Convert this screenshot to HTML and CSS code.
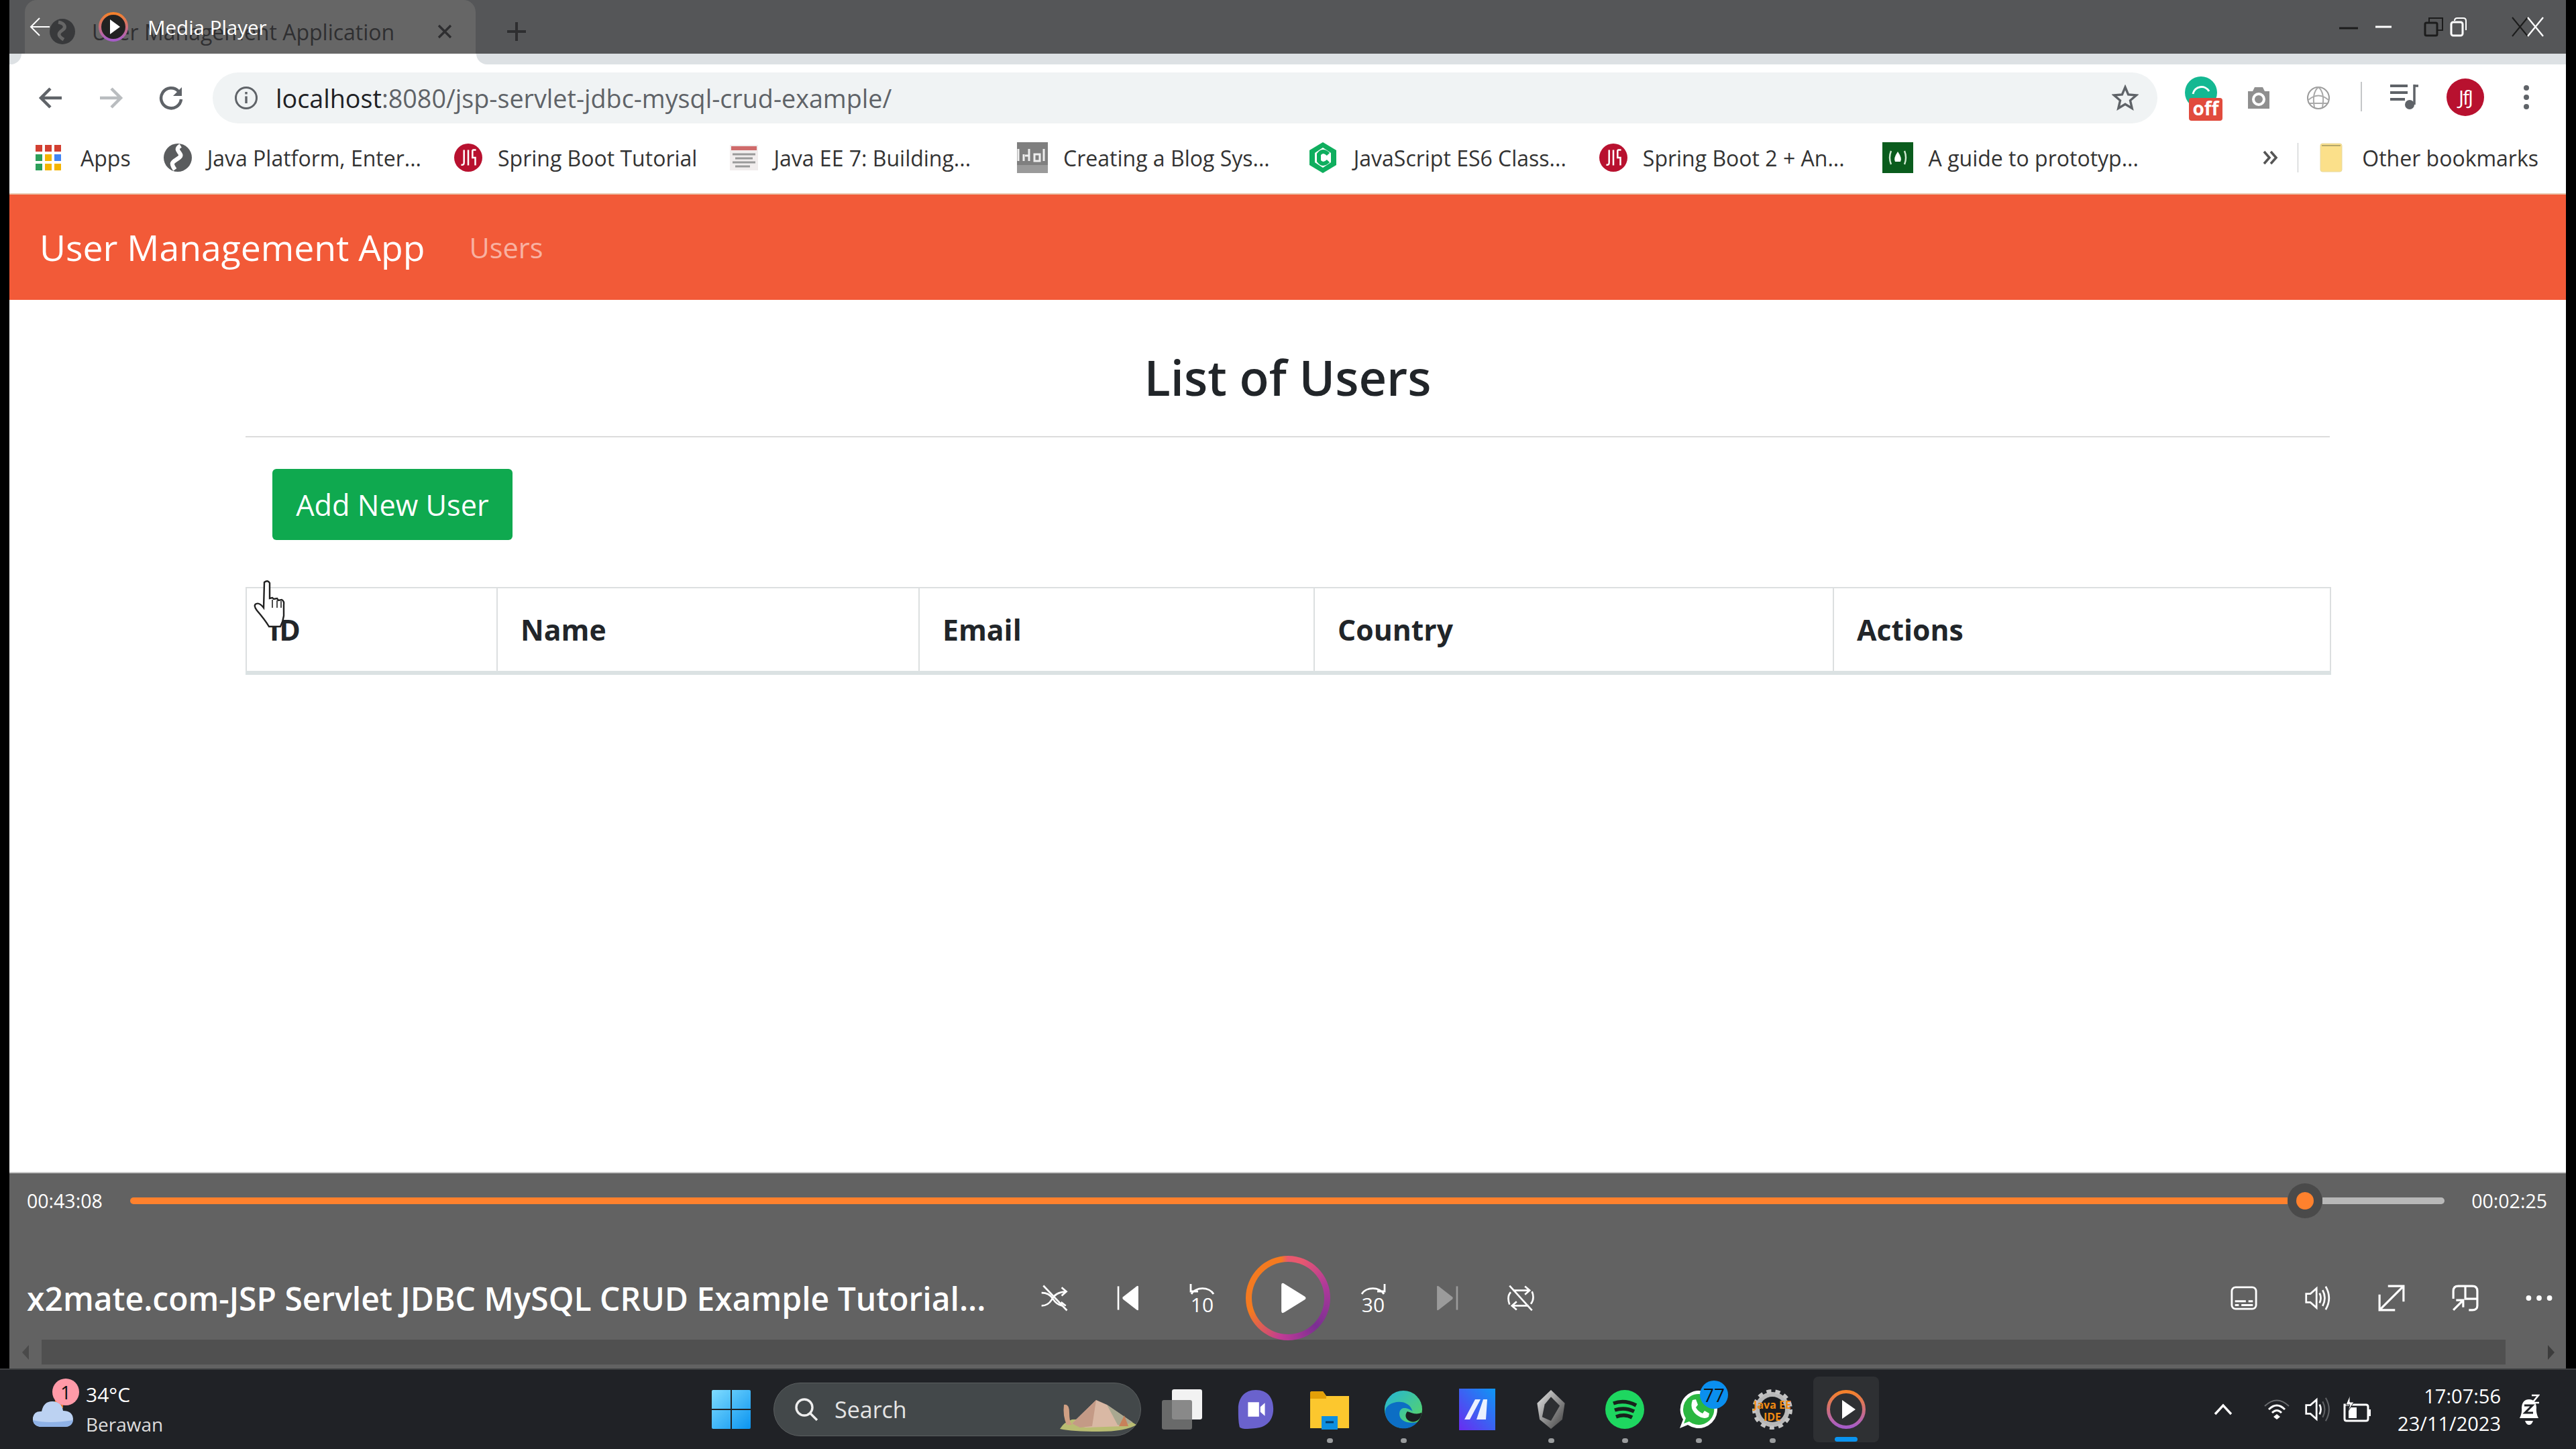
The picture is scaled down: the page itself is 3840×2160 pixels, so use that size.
FILE: index.html
```html
<!DOCTYPE html>
<html lang="en">
<head>
    <meta charset="UTF-8">
    <title>User Management Application</title>
    <link rel="stylesheet" href="styles.css">
</head>
<body>
<div class="screen">
    <div class="window">
        <!-- browser tabs -->
        <div class="tabbar">
            <div class="tab">
                <svg class="tab-globe" viewBox="0 0 40 40"><circle cx="20" cy="20" r="19" fill="#38393b"/><path d="M14 6c10 2 12 8 6 12s-8 8 2 14" fill="none" stroke="#666" stroke-width="5"/></svg>
                <span class="tab-title">User Management Application</span>
                <svg class="tab-close" viewBox="0 0 24 24"><path d="M3 3 21 21M21 3 3 21" stroke="#2e2e30" stroke-width="3.4"/></svg>
            </div>
            <svg class="tab-new" viewBox="0 0 32 32"><path d="M16 2V30M2 16H30" stroke="#2e2e30" stroke-width="4"/></svg>
            <div class="win-buttons">
                <svg class="win-a" viewBox="0 0 30 6"><path d="M1 3H29" stroke="#1c1c1c" stroke-width="3"/></svg>
                <svg class="win-b" viewBox="0 0 26 6"><path d="M1 3H25" stroke="#fff" stroke-width="3"/></svg>
                <svg class="win-c" viewBox="0 0 30 30"><rect x="2" y="9" width="18" height="19" rx="2" fill="none" stroke="#1c1c1c" stroke-width="3"/><path d="M8 8V2H28V20H21" fill="none" stroke="#1c1c1c" stroke-width="2"/></svg>
                <svg class="win-d" viewBox="0 0 26 30"><rect x="2" y="8" width="17" height="20" rx="3" fill="none" stroke="#fff" stroke-width="3"/><path d="M7 6Q7 2 11 2H20Q24 2 24 6V20" fill="none" stroke="#fff" stroke-width="2"/></svg>
                <svg class="win-e" viewBox="0 0 52 30"><path d="M2 1 25 29M25 1 2 29" stroke="#1c1c1c" stroke-width="2"/><path d="M25 1 48 29M48 1 25 29" stroke="#fff" stroke-width="2.4"/></svg>
            </div>
        </div>
        <div class="tabstrip"></div>

        <!-- address bar -->
        <div class="toolbar">
            <svg class="nav-icon" viewBox="0 0 40 40"><path d="M36 20H6M19 6 5 20l14 14" fill="none" stroke="#5f6368" stroke-width="4.5"/></svg>
            <svg class="nav-icon nav-fwd" viewBox="0 0 40 40"><path d="M4 20H34M21 6l14 14-14 14" fill="none" stroke="#b9bcbf" stroke-width="4.5"/></svg>
            <svg class="nav-icon nav-reload" viewBox="0 0 40 40"><path d="M31 10A15 15 0 1 0 35 22" fill="none" stroke="#5f6368" stroke-width="4.5"/><path d="M36 4V17H23Z" fill="#5f6368"/></svg>
            <div class="omnibox">
                <svg class="info-icon" viewBox="0 0 36 36"><circle cx="18" cy="18" r="15.5" fill="none" stroke="#5f6368" stroke-width="3"/><path d="M18 15.5V26M18 9V12.5" stroke="#5f6368" stroke-width="3.4"/></svg>
                <span class="url"><span class="url-host">localhost</span>:8080/jsp-servlet-jdbc-mysql-crud-example/</span>
                <svg class="star-icon" viewBox="0 0 40 40"><path d="M20 4 24.600 15 36.500 16 27.500 23.800 30.200 35.500 20 29.300 9.800 35.500 12.500 23.800 3.500 16 15.400 15Z" fill="none" stroke="#5f6368" stroke-width="3.4"/></svg>
            </div>
            <div class="ext-green">
                <svg viewBox="0 0 50 50"><circle cx="24" cy="24" r="24" fill="#14b892"/><path d="M12 26A13 13 0 0 1 36 22" fill="none" stroke="#fff" stroke-width="3"/></svg>
                <span class="ext-off">off</span>
            </div>
            <svg class="ext-camera" viewBox="0 0 40 40"><path d="M4 10H11L14 4H26L29 10H36V36H4Z" fill="#8f8f8f"/><circle cx="20" cy="22" r="8" fill="none" stroke="#fff" stroke-width="4"/></svg>
            <svg class="ext-globe" viewBox="0 0 36 36"><circle cx="18" cy="18" r="16" fill="none" stroke="#9b9b9b" stroke-width="2"/><path d="M3 21Q18 8 33 21M18 2Q8 10 12 32M18 2Q28 10 24 32M5 26H31" fill="none" stroke="#a9a9a9" stroke-width="2"/></svg>
            <div class="tool-sep"></div>
            <svg class="ext-music" viewBox="0 0 46 40"><path d="M2 4H28M2 14H28M2 24H24" stroke="#5f6368" stroke-width="4"/><path d="M38 4H44M38 2V32" stroke="#5f6368" stroke-width="3.500"/><circle cx="31" cy="32" r="7" fill="#5f6368"/></svg>
            <div class="avatar">JfJ</div>
            <svg class="ext-dots" viewBox="0 0 10 40"><circle cx="5" cy="6" r="4" fill="#5f6368"/><circle cx="5" cy="20" r="4" fill="#5f6368"/><circle cx="5" cy="34" r="4" fill="#5f6368"/></svg>
        </div>

        <!-- bookmarks -->
        <div class="bookmarks">
            <div class="bm bm-apps">
                <svg class="bm-icon bm-grid" viewBox="0 0 38 38"><g fill="#d23f31"><rect width="10" height="10"/><rect x="14" width="10" height="10"/><rect x="28" width="10" height="10"/></g><rect y="14" width="10" height="10" fill="#2d9f5a"/><rect x="14" y="14" width="10" height="10" fill="#f4b400"/><rect x="28" y="14" width="10" height="10" fill="#4285f4"/><rect y="28" width="10" height="10" fill="#2d9f5a"/><rect x="14" y="28" width="10" height="10" fill="#f4b400"/><rect x="28" y="28" width="10" height="10" fill="#f4b400"/></svg>
                <span>Apps</span>
            </div>
            <div class="bm">
                <svg class="bm-icon" viewBox="0 0 40 40"><circle cx="20" cy="20" r="20" fill="#5a5c5e"/><path d="M24 3C12 10 30 14 22 20S8 26 16 37" fill="none" stroke="#fff" stroke-width="6"/></svg>
                <span>Java Platform, Enter...</span>
            </div>
            <div class="bm">
                <svg class="bm-icon" viewBox="0 0 40 40"><circle cx="20" cy="20" r="20" fill="#b8112f"/><path d="M14 9V27Q14 31 10 30M20 9V31M26 9H31M26 9V20H30V31" fill="none" stroke="#fff" stroke-width="2.4"/></svg>
                <span>Spring Boot Tutorial</span>
            </div>
            <div class="bm">
                <svg class="bm-icon" viewBox="0 0 42 38"><rect width="42" height="38" fill="#f1eded"/><rect x="2" y="2" width="38" height="6" fill="#cf6a6a"/><path d="M4 14H38M8 20H34M4 26H38M8 32H30" stroke="#9a9a9a" stroke-width="3"/></svg>
                <span>Java EE 7: Building...</span>
            </div>
            <div class="bm bm-far">
                <svg class="bm-icon bm-wide" viewBox="0 0 46 46"><rect width="46" height="46" fill="#7f7f7f"/><rect y="34" width="46" height="12" fill="#9a9a9a"/><path d="M2 10V28M10 18V28M18 28V10M18 20H12M26 18H34V28H26ZM40 10V28" fill="none" stroke="#eee" stroke-width="3"/></svg>
                <span>Creating a Blog Sys...</span>
            </div>
            <div class="bm bm-near">
                <svg class="bm-icon bm-wide" viewBox="0 0 40 46"><path d="M20 0 40 12V34L20 46 0 34V12Z" fill="#0fae5e"/><path d="M20 8 32 16V30L20 38 8 30V16Z" fill="#fff"/><path d="M28 18Q20 10 14 18V28Q20 36 28 28" fill="none" stroke="#0fae5e" stroke-width="6"/></svg>
                <span>JavaScript ES6 Class...</span>
            </div>
            <div class="bm">
                <svg class="bm-icon" viewBox="0 0 40 40"><circle cx="20" cy="20" r="20" fill="#b8112f"/><path d="M14 9V27Q14 31 10 30M20 9V31M26 9H31M26 9V20H30V31" fill="none" stroke="#fff" stroke-width="2.4"/></svg>
                <span>Spring Boot 2 + An...</span>
            </div>
            <div class="bm bm-near">
                <svg class="bm-icon bm-wide" viewBox="0 0 46 46"><rect width="46" height="46" fill="#0a5c1d"/><path d="M13 13Q9 23 13 33M33 13Q37 23 33 33" fill="none" stroke="#cfe8d0" stroke-width="2.400"/><path d="M23 14Q30 24 27 29H19Q16 24 23 14Z" fill="#fff"/></svg>
                <span>A guide to prototyp...</span>
            </div>
            <div class="bm-right">
                <svg class="bm-more" viewBox="0 0 24 24"><path d="M3 3 11 12 3 21M13 3 21 12 13 21" fill="none" stroke="#555" stroke-width="3.600"/></svg>
                <div class="bm-sep"></div>
                <svg class="bm-folder" viewBox="0 0 34 44"><rect x="1" y="1" width="32" height="42" rx="3" fill="#fbe08a" stroke="#e8d9a0"/><path d="M3 4H31" stroke="#b5a76a" stroke-width="2"/></svg>
                <span>Other bookmarks</span>
            </div>
        </div>

        <!-- the page in the browser -->
        <div class="navbar">
            <a class="brand">User Management App</a>
            <a class="nav-link">Users</a>
        </div>
        <div class="page">
            <div class="container">
                <h1 class="page-title">List of Users</h1>
                <a class="btn-add">Add New User</a>
                <table class="users-table">
                    <colgroup>
                        <col class="col-id"><col class="col-name"><col class="col-email"><col class="col-country"><col class="col-actions">
                    </colgroup>
                    <thead>
                        <tr>
                            <th>ID</th>
                            <th>Name</th>
                            <th>Email</th>
                            <th>Country</th>
                            <th>Actions</th>
                        </tr>
                    </thead>
                </table>
                <svg class="hand-cursor" viewBox="0 0 52 72"><path d="M17 4Q22 0 25 5V28L29 27 31 29 36 28 38 31 43 30Q47 32 46 38L46 54Q45 62 41 70H24Q18 60 6 46Q0 38 5 36 10 34 16 42Z" fill="#fff" stroke="#222" stroke-width="2.400"/><path d="M29 30V42M36 31V42M42 32V42" stroke="#222" stroke-width="1.600"/></svg>
            </div>
        </div>

        <!-- media player controls on top of it -->
        <div class="player">
            <div class="seek-row">
                <span class="time">00:43:08</span>
                <div class="seek">
                    <div class="seek-done"></div>
                    <div class="seek-thumb"><div class="seek-dot"></div></div>
                    <div class="seek-left"></div>
                </div>
                <span class="time">00:02:25</span>
            </div>
            <div class="control-row">
                <div class="media-title">x2mate.com-JSP Servlet JDBC MySQL CRUD Example Tutorial...</div>
                <div class="controls">
                    <svg class="ctl" viewBox="0 0 50 50"><path d="M6 4 46 46" stroke="#fff" stroke-width="3"/><path d="M3 16Q16 16 22 26T38 38M3 38Q14 38 20 28Q26 15 44 14M37 7 45 14 37 21M36 32 44 38" fill="none" stroke="#fff" stroke-width="3"/></svg>
                    <svg class="ctl" viewBox="0 0 50 50"><path d="M8 5V45" stroke="#fff" stroke-width="3"/><path d="M42 6V44Q42 47 39 45L16 27Q14 25 16 23L39 5Q42 3 42 6Z" fill="#fff"/></svg>
                    <div class="ctl-skip">
                        <svg viewBox="0 0 40 20"><path d="M4 18A18 14 0 0 1 37 18M3 3V14H14" fill="none" stroke="#fff" stroke-width="2.800"/></svg>
                        <span>10</span>
                    </div>
                    <div class="play-ring"><svg viewBox="0 0 60 60"><path d="M14 8Q14 2 20 6L54 27Q58 30 54 33L20 54Q14 58 14 52Z" fill="#fff"/></svg></div>
                    <div class="ctl-skip">
                        <svg viewBox="0 0 40 20"><path d="M3 18A18 14 0 0 1 36 18M37 3V14H26" fill="none" stroke="#fff" stroke-width="2.800"/></svg>
                        <span>30</span>
                    </div>
                    <svg class="ctl" viewBox="0 0 50 50"><path d="M8 6V44Q8 47 11 45L34 27Q36 25 34 23L11 5Q8 3 8 6Z" fill="#9b9b9b"/><path d="M42 5V45" stroke="#9b9b9b" stroke-width="3"/></svg>
                    <svg class="ctl" viewBox="0 0 50 50"><path d="M6 4 44 46" stroke="#fff" stroke-width="3"/><path d="M6 36Q1 22 8 15M12 12H40M32 5 40 12 32 19M44 14Q49 26 42 35M38 38H10M18 31 10 38 18 45" fill="none" stroke="#fff" stroke-width="3"/></svg>
                </div>
                <div class="controls-right">
                    <svg class="ctl-sm" viewBox="0 0 42 38"><rect x="2" y="2" width="38" height="34" rx="6" fill="none" stroke="#fff" stroke-width="3"/><path d="M7 24H24M28 24H35M7 30H13M17 30H35" stroke="#fff" stroke-width="3"/></svg>
                    <svg class="ctl-sm" viewBox="0 0 42 44"><path d="M2 15H9L19 6V38L9 29H2Z" fill="none" stroke="#fff" stroke-width="3"/><path d="M24 14Q28 22 24 30M29 9Q36 22 29 35M34 3Q45 22 34 41" fill="none" stroke="#fff" stroke-width="3"/></svg>
                    <svg class="ctl-sm" viewBox="0 0 38 38"><path d="M2 36 36 2M14 2H36V24M2 14V36H24" fill="none" stroke="#fff" stroke-width="3"/></svg>
                    <svg class="ctl-sm" viewBox="0 0 38 38"><path d="M2 20V9Q2 2 9 2H29Q36 2 36 9V30Q36 36 29 36H24M19 2V20H36" fill="none" stroke="#fff" stroke-width="3"/><path d="M2 36 16 22M6 22H16V32" fill="none" stroke="#fff" stroke-width="3"/></svg>
                    <svg class="ctl-sm" viewBox="0 0 36 8"><circle cx="4" cy="4" r="3.500" fill="#fff"/><circle cx="18" cy="4" r="3.500" fill="#fff"/><circle cx="32" cy="4" r="3.500" fill="#fff"/></svg>
                </div>
            </div>
            <div class="scroll-row">
                <svg class="scroll-arrow" viewBox="0 0 12 22"><path d="M11 0V22L1 11Z" fill="#4a4a4a"/></svg>
                <div class="scroll-track"></div>
                <svg class="scroll-arrow" viewBox="0 0 12 22"><path d="M1 0V22L11 11Z" fill="#3c3c3c"/></svg>
            </div>
        </div>

        <!-- media player title over the browser tab -->
        <div class="mp-title">
            <svg class="mp-back" viewBox="0 0 32 30"><path d="M30 15H3M15 2 2 15 15 28" fill="none" stroke="#fff" stroke-width="2"/></svg>
            <svg class="mp-icon" viewBox="0 0 44 44"><defs><linearGradient id="mpRing" x1="0" y1="0" x2="0" y2="1"><stop offset="0" stop-color="#f5812a"/><stop offset="1" stop-color="#a65cc9"/></linearGradient></defs><circle cx="22" cy="22" r="20" fill="#222" stroke="url(#mpRing)" stroke-width="4"/><path d="M17 11 32 22 17 33Z" fill="#fff"/></svg>
            <span>Media Player</span>
        </div>
    </div>

    <!-- windows taskbar -->
    <div class="taskbar">
        <div class="weather">
            <div class="weather-icon">
                <svg viewBox="0 0 62 46"><path d="M34 4H46V16H34Z" fill="#e0741c"/><path d="M12 44Q0 42 1 30 3 20 14 21 17 6 30 6 44 6 46 20 60 20 61 32 60 44 48 44Z" fill="#bcd2f2"/><path d="M12 44Q2 42 1 34 24 40 61 34 60 44 48 44Z" fill="#8fb2e6"/></svg>
                <span class="weather-badge">1</span>
            </div>
            <div class="weather-text">
                <span class="weather-temp">34°C</span>
                <span class="weather-desc">Berawan</span>
            </div>
        </div>
        <div class="task-center">
            <svg class="win-logo" viewBox="0 0 58 58"><defs><linearGradient id="winBlue" x1="0" y1="0" x2="1" y2="1"><stop offset="0" stop-color="#7fdcff"/><stop offset="1" stop-color="#0a94f0"/></linearGradient></defs><path d="M0 2Q0 0 2 0H28V28H0ZM30 0H56Q58 0 58 2V28H30ZM0 30H28V58H2Q0 58 0 56ZM30 30H58V56Q58 58 56 58H30Z" fill="url(#winBlue)"/></svg>
            <div class="search">
                <svg class="search-icon" viewBox="0 0 36 36"><circle cx="15" cy="15" r="12" fill="none" stroke="#eee" stroke-width="3.400"/><path d="M24 24 34 34" stroke="#eee" stroke-width="3.400"/></svg>
                <span>Search</span>
                <svg class="search-art" viewBox="0 0 116 48"><path d="M2 44Q8 34 20 30L100 28 116 38Q100 48 60 48 20 48 2 44Z" fill="#b9bc72"/><path d="M20 36 56 1 72 8 110 34 96 40 40 42Z" fill="#d9b8a4"/><path d="M56 1 50 40 32 42 20 36Z" fill="#c49a86"/><path d="M8 8Q16 6 16 20T20 38L12 38Q6 24 8 8Z" fill="#cf9f83"/><path d="M72 8 88 38 96 40 110 34Z" fill="#a9a890"/><path d="M98 24 104 40 90 40Z" fill="#c8815a"/></svg>
            </div>
            <div class="task-icons">
                <div class="task-app">
                    <svg viewBox="0 0 56 56"><rect x="14" y="0" width="42" height="42" rx="3" fill="#f2f2f2"/><rect x="0" y="15" width="42" height="41" rx="3" fill="#777" fill-opacity=".85"/></svg>
                </div>
                <div class="task-app">
                    <svg viewBox="0 0 56 62"><path d="M28 1C46 1 55 13 55 30 55 48 45 58 28 60 20 61 6 62 3 58 1 50 1 40 1 30 1 13 11 1 28 1Z" fill="#6a62cd"/><path d="M16 20H33V42H16ZM35 27 42 21V41L35 35Z" fill="#fff"/></svg>
                </div>
                <div class="task-app task-run">
                    <svg viewBox="0 0 60 60"><path d="M1 6Q1 3 4 3H20L25 10H59V58H1Z" fill="#fcc72e"/><path d="M1 6Q1 3 4 3H20L25 10V14H1Z" fill="#e3a008"/><rect x="18" y="40" width="24" height="20" fill="#0e8fe0"/><path d="M24 49H36" stroke="#053a66" stroke-width="3"/></svg>
                </div>
                <div class="task-app task-run">
                    <svg viewBox="0 0 60 62"><defs><linearGradient id="edgeA" x1="0" y1="0" x2="1" y2="1"><stop offset="0" stop-color="#24b4d8"/><stop offset="1" stop-color="#5ed85a"/></linearGradient></defs><circle cx="30" cy="31" r="29" fill="url(#edgeA)"/><path d="M2 34C2 58 36 70 52 50 40 54 22 50 24 36 26 24 40 30 44 34 40 18 20 16 8 24 4 27 2 30 2 34Z" fill="#0c6ec4"/><path d="M36 34C42 36 50 40 58 36 58 44 52 50 46 50 36 50 30 42 36 34Z" fill="#1b1f22"/></svg>
                </div>
                <div class="task-app">
                    <svg class="task-square" viewBox="0 0 54 62"><defs><linearGradient id="blueApp" x1="1" y1="0" x2="0" y2="1"><stop offset="0" stop-color="#0d98f5"/><stop offset="1" stop-color="#6a2bf0"/></linearGradient></defs><rect width="54" height="62" fill="url(#blueApp)"/><path d="M8 46 24 16H32L16 46ZM26 46 36 16H42L40 46Z" fill="#fff" fill-opacity=".9"/></svg>
                </div>
                <div class="task-app task-run">
                    <svg viewBox="0 0 48 64"><defs><linearGradient id="crystal" x1="0" y1="0" x2="1" y2="1"><stop offset="0" stop-color="#e8e8e8"/><stop offset="1" stop-color="#3c3c3c"/></linearGradient></defs><path d="M24 1 46 22 42 48 24 63 6 48 2 22Z" fill="url(#crystal)"/><path d="M24 12 38 26 24 50 10 44 14 24Z" fill="#2d2f32"/></svg>
                </div>
                <div class="task-app task-run">
                    <svg viewBox="0 0 60 60"><circle cx="30" cy="30" r="29" fill="#1ed760"/><path d="M13 21Q30 15 47 24M15 31Q30 26 44 33M17 41Q30 36 41 42" fill="none" stroke="#18221c" stroke-width="5.500"/></svg>
                </div>
                <div class="task-app task-run">
                    <svg viewBox="0 0 60 60"><path d="M30 2A28 28 0 1 1 14 53L2 58 7 45A28 28 0 0 1 30 2Z" fill="#fff"/><path d="M30 7A23 23 0 1 1 16 48L8 51 11 43A23 23 0 0 1 30 7Z" fill="#2bb741"/><path d="M21 16 26 15 29 23 26 27Q29 33 36 36L39 32 46 36 45 41Q38 46 27 38 16 29 21 16Z" fill="#fff"/></svg>
                    <span class="wa-badge">77</span>
                </div>
                <div class="task-app task-run task-gear">
                    <svg viewBox="0 0 60 60"><circle cx="30" cy="30" r="22" fill="none" stroke="#b8b8b8" stroke-width="8"/><circle cx="30" cy="30" r="27" fill="none" stroke="#c4c4c4" stroke-width="6" stroke-dasharray="7 6.130"/><circle cx="30" cy="30" r="19" fill="#1b1d20"/></svg>
                    <span class="gear-text">Java EE<br>IDE</span>
                </div>
                <div class="task-app task-active">
                    <svg viewBox="0 0 60 60"><defs><linearGradient id="mpRing2" x1="0" y1="0" x2="0" y2="1"><stop offset="0" stop-color="#f5812a"/><stop offset="1" stop-color="#a65cc9"/></linearGradient></defs><circle cx="30" cy="30" r="26.500" fill="#2e3033" stroke="url(#mpRing2)" stroke-width="5"/><path d="M24 16 44 30 24 44Z" fill="#fff"/></svg>
                </div>
            </div>
        </div>
        <div class="tray">
            <svg class="tray-chev" viewBox="0 0 28 18"><path d="M2 16 14 3 26 16" fill="none" stroke="#fff" stroke-width="3.400"/></svg>
            <svg class="tray-wifi" viewBox="0 0 40 32"><path d="M2 11Q20 -6 38 11" fill="none" stroke="#6a6c6f" stroke-width="2"/><path d="M8 16Q20 4 32 16M13 21Q20 14 27 21" fill="none" stroke="#fff" stroke-width="3"/><path d="M20 23 25 27 20 31 15 27Z" fill="#fff"/></svg>
            <svg class="tray-vol" viewBox="0 0 42 44"><path d="M2 15H9L19 6V38L9 29H2Z" fill="none" stroke="#fff" stroke-width="3"/><path d="M24 14Q28 22 24 30" fill="none" stroke="#fff" stroke-width="3"/><path d="M29 9Q36 22 29 35M34 3Q45 22 34 41" fill="none" stroke="#5e6063" stroke-width="2.400"/></svg>
            <svg class="tray-batt" viewBox="0 0 42 42"><path d="M2 14H34Q37 14 37 17V35Q37 38 34 38H5Q2 38 2 35Z" fill="none" stroke="#fff" stroke-width="3"/><rect x="37" y="21" width="4" height="10" fill="#fff"/><path d="M8 18H20V34H8Z" fill="#fff"/><path d="M10 0 4 14H10L7 24 16 10H10Z" fill="#fff" stroke="#202226"/></svg>
            <div class="clock">
                <span>17:07:56</span>
                <span>23/11/2023</span>
            </div>
            <div class="tray-bell">
                <svg viewBox="0 0 34 46"><path d="M4 36Q8 28 7 20 8 8 18 8 28 8 29 20 28 28 32 36Z" fill="#fff"/><path d="M12 40H24Q22 46 18 46 14 46 12 40Z" fill="#fff"/><path d="M11 17H23L12 28H24" fill="none" stroke="#202226" stroke-width="3"/><path d="M22 2H32L23 13H33" fill="none" stroke="#fff" stroke-width="2.600"/></svg>
            </div>
        </div>
    </div>
</div>
</body>
</html>
```
FILE: styles.css
```css
* {
    box-sizing: border-box;
}
html, body {
    margin: 0;
    height: 100%;
}
body {
    font-family: "Open Sans", "Liberation Sans", sans-serif;
    background-color: #000;
    overflow: hidden;
}
svg {
    display: block;
    flex: none;
}
.screen {
    width: 3840px;
    height: 2160px;
    display: flex;
    flex-direction: column;
}
.window {
    position: relative;
    flex: 1;
    min-height: 0;
    margin: 0 15px 0 14px;
    display: flex;
    flex-direction: column;
    background-color: #fff;
}

/* tabs */
.tabbar {
    height: 80px;
    flex: none;
    display: flex;
    align-items: center;
    background-color: #555658;
}
.tab {
    width: 672px;
    height: 80px;
    margin-left: 23px;
    display: flex;
    align-items: center;
    border-radius: 18px 18px 0 0;
    background-color: #666;
    padding: 14px 34px 0 36px;
}
.tab-globe {
    width: 40px;
    height: 46px;
}
.tab-title {
    margin-left: 24px;
    flex: 1;
    font-size: 32px;
    color: #2f2f31;
    white-space: nowrap;
}
.tab-close {
    width: 24px;
    height: 30px;
}
.tab-new {
    width: 32px;
    height: 32px;
    margin: 14px 0 0 45px;
}
.win-buttons {
    margin-left: auto;
    display: flex;
    align-items: center;
    padding-right: 30px;
}
.win-a { width: 30px; height: 6px; margin-top: 4px; }
.win-b { width: 26px; height: 6px; margin: 0 0 0 24px; }
.win-c { width: 30px; height: 30px; margin-left: 47px; }
.win-d { width: 26px; height: 30px; margin-left: 9px; }
.win-e { width: 52px; height: 30px; margin-left: 65px; }
.tabstrip {
    position: relative;
    height: 16px;
    flex: none;
    margin-left: 696px;
    background-color: #dde1e4;
    border-bottom-left-radius: 16px;
}
.tabstrip::before {
    content: "";
    position: absolute;
    left: -696px;
    top: 0;
    width: 18px;
    height: 16px;
    background-color: #dde1e4;
    border-bottom-right-radius: 16px;
}

/* toolbar */
.toolbar {
    height: 96px;
    flex: none;
    display: flex;
    align-items: flex-start;
    padding: 12px 0 0 42px;
    position: relative;
}
.nav-icon {
    width: 40px;
    height: 40px;
    margin-top: 18px;
    flex: none;
}
.nav-fwd { margin-left: 49px; }
.nav-reload { margin-left: 50px; }
.omnibox {
    width: 2899px;
    height: 76px;
    margin-left: 42px;
    border-radius: 38px;
    background-color: #f0f3f4;
    display: flex;
    align-items: center;
    padding: 0 28px 0 32px;
}
.info-icon {
    width: 36px;
    height: 36px;
}
.url {
    margin-left: 26px;
    font-size: 37.7px;
    color: #5f6368;
    white-space: nowrap;
}
.url-host {
    color: #202124;
}
.star-icon {
    width: 40px;
    height: 40px;
    margin-left: auto;
}
.ext-green {
    position: relative;
    width: 52px;
    height: 66px;
    margin: 6px 0 0 41px;
}
.ext-green svg {
    width: 50px;
    height: 50px;
}
.ext-off {
    position: absolute;
    right: -4px;
    bottom: 0;
    width: 50px;
    height: 34px;
    border-radius: 4px;
    background-color: #e14b3d;
    color: #fff;
    font-size: 28px;
    font-weight: 700;
    line-height: 30px;
    text-align: center;
}
.ext-camera { width: 40px; height: 40px; margin: 18px 0 0 38px; }
.ext-globe { width: 36px; height: 36px; margin: 20px 0 0 51px; }
.tool-sep { width: 2px; height: 44px; margin: 14px 0 0 45px; background-color: #c4c6c8; }
.ext-music { width: 46px; height: 40px; margin: 16px 0 0 40px; }
.avatar {
    width: 56px;
    height: 56px;
    margin: 9px 0 0 40px;
    border-radius: 50%;
    background-color: #b8112f;
    color: #fff;
    font-size: 30px;
    line-height: 56px;
    text-align: center;
    letter-spacing: -2px;
}
.ext-dots { width: 10px; height: 40px; margin: 17px 0 0 58px; }

/* bookmarks */
.bookmarks {
    height: 96px;
    flex: none;
    display: flex;
    align-items: center;
    gap: 49px;
    padding: 0 41px 10px 39px;
    font-size: 32px;
    color: #333;
}
.bm {
    display: flex;
    align-items: center;
    gap: 23px;
    white-space: nowrap;
}
.bm-apps { gap: 29px; }
.bm-near { margin-left: 7px; }
.bm-far { margin-left: 20px; }
.bm-icon {
    width: 42px;
    height: 42px;
}
.bm-grid {
    width: 38px;
    height: 38px;
}
.bm-wide {
    width: 46px;
    height: 46px;
}
.bm-right {
    margin-left: auto;
    display: flex;
    align-items: center;
    white-space: nowrap;
}
.bm-more { width: 24px; height: 24px; }
.bm-sep { width: 1px; height: 44px; margin-left: 29px; background-color: #c4c6c8; }
.bm-folder { width: 34px; height: 44px; margin: 0 29px 0 32px; }

/* the web page */
.navbar {
    height: 159px;
    flex: none;
    display: flex;
    align-items: center;
    padding: 0 45px;
    border-top: 2px solid #eac9b0;
    background-color: #f25a38;
}
.brand {
    font-size: 53.5px;
    color: #fff;
    white-space: nowrap;
}
.nav-link {
    margin-left: 66px;
    font-size: 41.5px;
    color: rgba(255, 255, 255, .55);
}
.page {
    flex: 1;
    min-height: 0;
    padding: 0 352px;
}
.container {
    position: relative;
    width: 3107px;
}
.page-title {
    margin: 0;
    padding: 65px 0 0;
    height: 205px;
    border-bottom: 2px solid #dcdcdc;
    font-size: 72.3px;
    font-weight: 600;
    line-height: 100px;
    text-align: center;
    color: #212529;
}
.btn-add {
    display: flex;
    align-items: center;
    justify-content: center;
    width: 358px;
    height: 106px;
    margin: 47px 0 0 40px;
    border-radius: 6px;
    background-color: #0fa94f;
    color: #fff;
    font-size: 43.3px;
}
.users-table {
    width: 100%;
    margin-top: 70px;
    border-collapse: collapse;
    table-layout: fixed;
    color: #212529;
}
.col-id { width: 374px; }
.col-name { width: 629px; }
.col-email { width: 589px; }
.col-country { width: 774px; }
.col-actions { width: 741px; }
.users-table th {
    height: 127px;
    padding: 0 34px;
    border: 2px solid #dcdfe0;
    border-bottom: 6px solid #dbe2e3;
    font-size: 42.7px;
    font-weight: 700;
    text-align: left;
}
.hand-cursor {
    position: absolute;
    left: 11px;
    top: 417px;
    width: 52px;
    height: 72px;
}

/* media player */
.player {
    height: 293px;
    flex: none;
    border-top: 2px solid #c9c9c9;
    background-color: #626262;
    color: #fff;
}
.seek-row {
    height: 82px;
    display: flex;
    align-items: center;
    padding: 0 28px 0 26px;
}
.time {
    font-size: 28.5px;
    white-space: nowrap;
}
.seek {
    flex: 1;
    margin: 0 40px 0 41px;
    display: flex;
    align-items: center;
}
.seek-done {
    flex: 1;
    height: 10px;
    border-radius: 5px 0 0 5px;
    background-color: #ff812d;
}
.seek-thumb {
    width: 52px;
    height: 52px;
    flex: none;
    display: flex;
    align-items: center;
    justify-content: center;
    border-radius: 50%;
    background-color: #4a4a4a;
}
.seek-dot {
    width: 26px;
    height: 26px;
    border-radius: 50%;
    background-color: #ff812d;
}
.seek-left {
    width: 182px;
    height: 10px;
    flex: none;
    border-radius: 0 5px 5px 0;
    background-color: #b8b8b8;
}
.control-row {
    height: 124px;
    margin-top: 42px;
    display: flex;
    align-items: center;
    padding-left: 26px;
    position: relative;
}
.media-title {
    width: 1500px;
    font-size: 48px;
    font-weight: 600;
    white-space: nowrap;
}
.controls {
    position: absolute;
    left: 1536px;
    top: 0;
    height: 124px;
    display: flex;
    align-items: center;
}
.ctl {
    width: 44px;
    height: 44px;
    margin-right: 66px;
}
.ctl-skip {
    width: 44px;
    margin-right: 66px;
    font-size: 30px;
    line-height: 28px;
    text-align: center;
}
.ctl-skip svg {
    width: 40px;
    height: 20px;
    margin: 0 auto;
}
.play-ring {
    width: 126px;
    height: 126px;
    flex: none;
    margin: 0 42px 0 -23px;
    border-radius: 50%;
    display: flex;
    align-items: center;
    justify-content: center;
    background:
        linear-gradient(#666, #666) padding-box,
        conic-gradient(#e8586f 0deg 20deg, #b03a9a 70deg, #7b2f93 135deg, #c03b96 190deg, #f47a20 250deg, #f47a20 350deg, #e8586f 360deg) border-box;
    border: 9px solid transparent;
}
.play-ring svg {
    width: 52px;
    height: 52px;
    margin-left: 8px;
}
.controls-right {
    margin-left: auto;
    display: flex;
    align-items: center;
    justify-content: space-between;
    width: 500px;
    padding-right: 20px;
}
.ctl-sm {
    width: 40px;
    height: 40px;
}
.scroll-row {
    height: 37px;
    display: flex;
    align-items: center;
    padding: 0 16px 0 18px;
}
.scroll-arrow {
    width: 12px;
    height: 22px;
}
.scroll-track {
    width: 3674px;
    height: 37px;
    margin: 0 62px 0 18px;
    background-color: #505050;
}
.mp-title {
    position: absolute;
    left: 0;
    top: 0;
    height: 80px;
    display: flex;
    align-items: center;
    color: #fff;
    font-size: 29.5px;
}
.mp-back {
    width: 32px;
    height: 30px;
    margin-left: 30px;
}
.mp-icon {
    width: 44px;
    height: 44px;
    margin-left: 71px;
}
.mp-title span {
    margin-left: 29px;
    white-space: nowrap;
}

/* taskbar */
.taskbar {
    height: 120px;
    flex: none;
    position: relative;
    display: flex;
    align-items: center;
    border-top: 2px solid #3d3e40;
    background-color: #202226;
    color: #fff;
}
.weather {
    display: flex;
    align-items: center;
    margin-left: 48px;
}
.weather-icon {
    position: relative;
    width: 62px;
    height: 46px;
    margin-top: 10px;
}
.weather-icon svg {
    width: 62px;
    height: 46px;
}
.weather-badge {
    position: absolute;
    left: 30px;
    top: -28px;
    width: 40px;
    height: 40px;
    border-radius: 50%;
    background-color: #ff9aa8;
    color: #111;
    font-size: 28px;
    line-height: 40px;
    text-align: center;
}
.weather-text {
    display: flex;
    flex-direction: column;
    margin-left: 18px;
    line-height: 44px;
    white-space: nowrap;
}
.weather-temp { font-size: 30px; }
.weather-desc { font-size: 28px; color: #ddd; }
.task-center {
    position: absolute;
    left: 1061px;
    top: 0;
    height: 118px;
    display: flex;
    align-items: center;
}
.win-logo {
    width: 58px;
    height: 58px;
}
.search {
    width: 548px;
    height: 80px;
    margin-left: 34px;
    display: flex;
    align-items: center;
    border-radius: 40px;
    border: 1px solid #5b5f60;
    background-color: #43484a;
    padding-left: 30px;
    font-size: 34px;
    color: #e4e4e4;
    position: relative;
}
.search-icon {
    width: 36px;
    height: 42px;
    margin-right: 24px;
}
.search-art {
    position: absolute;
    right: 6px;
    top: 24px;
    width: 116px;
    height: 48px;
}
.task-icons {
    display: flex;
    align-items: center;
    margin-left: 6px;
}
.task-app {
    position: relative;
    width: 110px;
    height: 98px;
    display: flex;
    align-items: center;
    justify-content: center;
}
.task-app > svg {
    width: 60px;
    height: 60px;
}
.task-app > .task-square {
    width: 54px;
    height: 62px;
}
.task-run::after {
    content: "";
    position: absolute;
    left: 50%;
    bottom: -1px;
    width: 9px;
    height: 7px;
    margin-left: -4px;
    border-radius: 4px;
    background-color: #9a9c9e;
}
.wa-badge {
    position: absolute;
    left: 57px;
    top: 6px;
    width: 42px;
    height: 42px;
    border-radius: 50%;
    background-color: #0a8fef;
    color: #111;
    font-size: 28px;
    line-height: 42px;
    text-align: center;
}
.gear-text {
    position: absolute;
    left: 0;
    right: 0;
    top: 33px;
    font-size: 16px;
    font-weight: 700;
    line-height: 18px;
    text-align: center;
    color: #f08a12;
}
.task-active {
    width: 98px;
    margin-left: 6px;
    border-radius: 8px;
    background-color: #2e3033;
}
.task-active::after {
    content: "";
    position: absolute;
    left: 32px;
    bottom: 1px;
    width: 34px;
    height: 7px;
    border-radius: 4px;
    background-color: #0a94f0;
}
.tray {
    margin-left: auto;
    display: flex;
    align-items: center;
    padding-right: 54px;
}
.tray-chev { width: 28px; height: 18px; }
.tray-wifi { width: 40px; height: 32px; margin-left: 46px; }
.tray-vol { width: 42px; height: 40px; margin-left: 20px; }
.tray-batt { width: 42px; height: 42px; margin-left: 17px; }
.clock {
    display: flex;
    flex-direction: column;
    align-items: flex-end;
    margin-left: 39px;
    font-size: 29px;
    line-height: 41px;
}
.tray-bell {
    margin-left: 24px;
}
.tray-bell svg {
    width: 34px;
    height: 46px;
}
```
